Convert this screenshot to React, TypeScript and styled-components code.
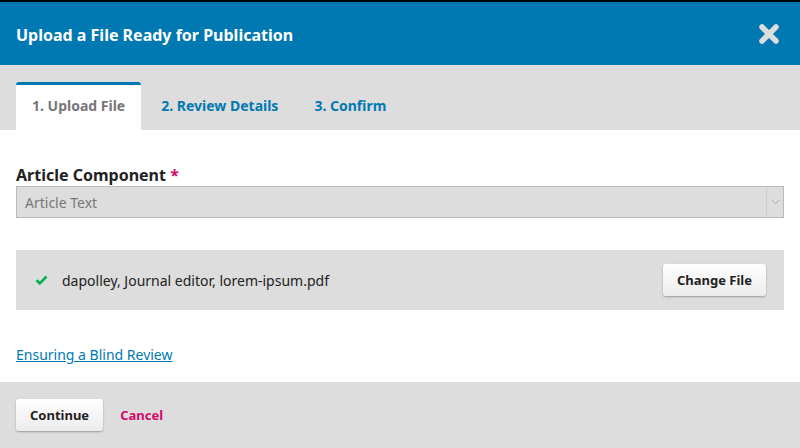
import React from "react";
import styled, { createGlobalStyle } from "styled-components";

const Global = createGlobalStyle`
  html, body { margin: 0; padding: 0; background: #fff; }
  body { font-family: "Noto Sans", "Open Sans", sans-serif; }
  * { box-sizing: border-box; }
`;

const Modal = styled.div`
  width: 800px;
  height: 448px;
  display: flex;
  flex-direction: column;
  border-top: 2px solid #000;
  background: #fff;
  overflow: hidden;
`;

const Header = styled.header`
  height: 63px;
  flex: none;
  background: #0079b3;
  display: flex;
  align-items: center;
  justify-content: space-between;
  padding: 0 20px 0 16px;
`;

const Title = styled.h1`
  margin: 0;
  font-size: 16px;
  font-weight: 700;
  color: #fff;
  padding-top: 2px;
`;

const CloseButton = styled.button`
  border: 0;
  background: none;
  padding: 0;
  display: flex;
  cursor: pointer;
`;

const TabBar = styled.nav`
  height: 65px;
  flex: none;
  background: #ddd;
  display: flex;
  align-items: flex-end;
  gap: 4px;
  padding: 0 16px;
`;

const Tab = styled.div<{ $active?: boolean }>`
  height: 48px;
  display: flex;
  align-items: center;
  padding: 0 16px 4px;
  font-size: 14px;
  font-weight: 700;
  color: ${(p) => (p.$active ? "#777" : "#0079b3")};
  background: ${(p) => (p.$active ? "#fff" : "transparent")};
  border-top: 3px solid ${(p) => (p.$active ? "#0079b3" : "transparent")};
  border-radius: 3px 3px 0 0;
`;

const Body = styled.main`
  flex: 1;
  padding: 35px 16px 0;
  display: flex;
  flex-direction: column;
`;

const Label = styled.label`
  font-size: 16px;
  font-weight: 700;
  color: #222;
  line-height: 20px;
`;

const Required = styled.span`
  color: #d00a6c;
`;

const Select = styled.div`
  height: 32px;
  border: 1px solid #bbb;
  background: #ddd;
  display: flex;
  align-items: stretch;
  margin-top: 1px;
`;

const SelectText = styled.span`
  flex: 1;
  display: flex;
  align-items: center;
  padding-left: 8px;
  font-size: 14px;
  color: #777;
`;

const SelectArrow = styled.span`
  width: 17px;
  border-left: 1px solid #ccc;
  display: flex;
  align-items: center;
  justify-content: center;
`;

const FilePanel = styled.div`
  margin-top: 32px;
  height: 60px;
  background: #ddd;
  display: flex;
  align-items: center;
  padding: 0 18px 0 19px;
`;

const FileName = styled.span`
  flex: 1;
  font-size: 14px;
  color: #222;
  margin-left: 14px;
`;

const Button = styled.button`
  height: 32px;
  padding: 0 14px;
  border: 0;
  border-radius: 3px;
  background: linear-gradient(#fff, #ececec);
  box-shadow: 0 1px 2px rgba(0, 0, 0, 0.3);
  font-family: inherit;
  font-size: 13px;
  font-weight: 700;
  color: #222;
`;

const BlindLink = styled.a`
  margin-top: 35px;
  font-size: 14px;
  color: #0079b3;
  text-decoration: underline;
  align-self: flex-start;
`;

const Footer = styled.footer`
  height: 66px;
  flex: none;
  background: #ddd;
  display: flex;
  align-items: center;
  gap: 17px;
  padding: 0 16px;
`;

const CancelLink = styled.a`
  font-size: 13px;
  font-weight: 700;
  color: #d00a6c;
`;

export default function App() {
  return (
    <>
      <Global />
      <Modal>
        <Header>
          <Title>Upload a File Ready for Publication</Title>
          <CloseButton aria-label="Close">
            <svg width="22" height="22" viewBox="0 0 22 22">
              <path d="M4 4 L18 18 M18 4 L4 18" stroke="#ddd" strokeWidth="5.5" strokeLinecap="round" />
            </svg>
          </CloseButton>
        </Header>
        <TabBar>
          <Tab $active>1. Upload File</Tab>
          <Tab>2. Review Details</Tab>
          <Tab>3. Confirm</Tab>
        </TabBar>
        <Body>
          <Label>
            Article Component <Required>*</Required>
          </Label>
          <Select>
            <SelectText>Article Text</SelectText>
            <SelectArrow>
              <svg width="9" height="6" viewBox="0 0 9 6">
                <path d="M1 1 L4.5 4.5 L8 1" fill="none" stroke="#aaa" strokeWidth="1" />
              </svg>
            </SelectArrow>
          </Select>
          <FilePanel>
            <svg width="13" height="10" viewBox="0 0 13 10">
              <path d="M1.5 5.2 L4.8 8.3 L11.5 1.5" fill="none" stroke="#00b24e" strokeWidth="2.6" />
            </svg>
            <FileName>dapolley, Journal editor, lorem-ipsum.pdf</FileName>
            <Button>Change File</Button>
          </FilePanel>
          <BlindLink href="#">Ensuring a Blind Review</BlindLink>
        </Body>
        <Footer>
          <Button>Continue</Button>
          <CancelLink>Cancel</CancelLink>
        </Footer>
      </Modal>
    </>
  );
}
